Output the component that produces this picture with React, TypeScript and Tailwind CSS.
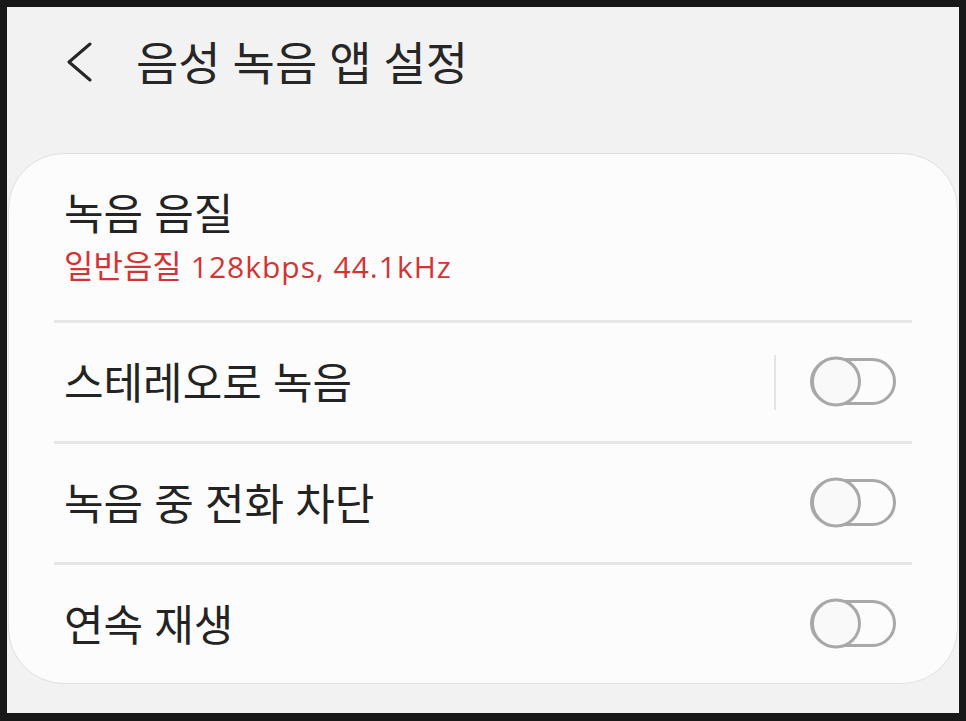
import React from 'react';

const FONT = { fontFamily: "'Open Sans', 'Noto Sans CJK KR', sans-serif" };

const Toggle = () => (
    <svg width="90" height="54" viewBox="0 0 90 54" className="shrink-0">
        <rect x="3.5" y="4.5" width="83" height="44" rx="22" fill="none" stroke="#a8a8a8" strokeWidth="3" />
        <circle cx="28" cy="26.5" r="23.5" fill="#f9f9f9" stroke="#a8a8a8" strokeWidth="3" />
    </svg>
);

const Divider = () => <div className="mx-[45px] h-[3px] bg-[#e6e6e6]" />;

const ToggleRow = ({ label, separator }: { label: string; separator?: boolean }) => (
    <div className="flex items-center h-[118px] pl-[55px] pr-[59px]">
        <span className="flex-1 text-[43px] text-[#232323] leading-none">{label}</span>
        {separator && <div className="w-[2px] h-[55px] bg-[#e4e4e4] mr-[32px]" />}
        <Toggle />
    </div>
);

export default function App() {
    return (
        <div className="w-[966px] h-[721px] bg-[#181818] pt-[7px] pl-[7px] pr-[7px] pb-[8px]" style={FONT}>
            <div className="w-full h-full bg-[#f2f2f2] flex flex-col">
                <div className="h-[146px] flex items-start pt-[27px]">
                    <div className="flex items-center h-[56px]">
                        <svg width="30" height="40" viewBox="0 0 30 40" className="ml-[59px]">
                            <polyline points="24,2 3,20 24,38" fill="none" stroke="#262626" strokeWidth="3" strokeLinecap="round" strokeLinejoin="round" />
                        </svg>
                        <h1 className="ml-[40px] text-[46px] text-[#262626] leading-none">음성 녹음 앱 설정</h1>
                    </div>
                </div>
                <div className="mx-[1px] bg-[#fcfcfc] border border-[#e0e0e0] rounded-[56px] flex flex-col">
                    <div className="h-[166px] flex flex-col justify-center pl-[55px]">
                        <span className="text-[43px] text-[#232323] leading-none">녹음 음질</span>
                        <span className="mt-[15px] text-[#d23434] leading-none flex items-baseline">
                            <span className="text-[32px]">일반음질</span>
                            <span className="text-[30px] tracking-[1px] ml-[9px]">128kbps, 44.1kHz</span>
                        </span>
                    </div>
                    <Divider />
                    <ToggleRow label="스테레오로 녹음" separator />
                    <Divider />
                    <ToggleRow label="녹음 중 전화 차단" />
                    <Divider />
                    <ToggleRow label="연속 재생" />
                </div>
            </div>
        </div>
    );
}
